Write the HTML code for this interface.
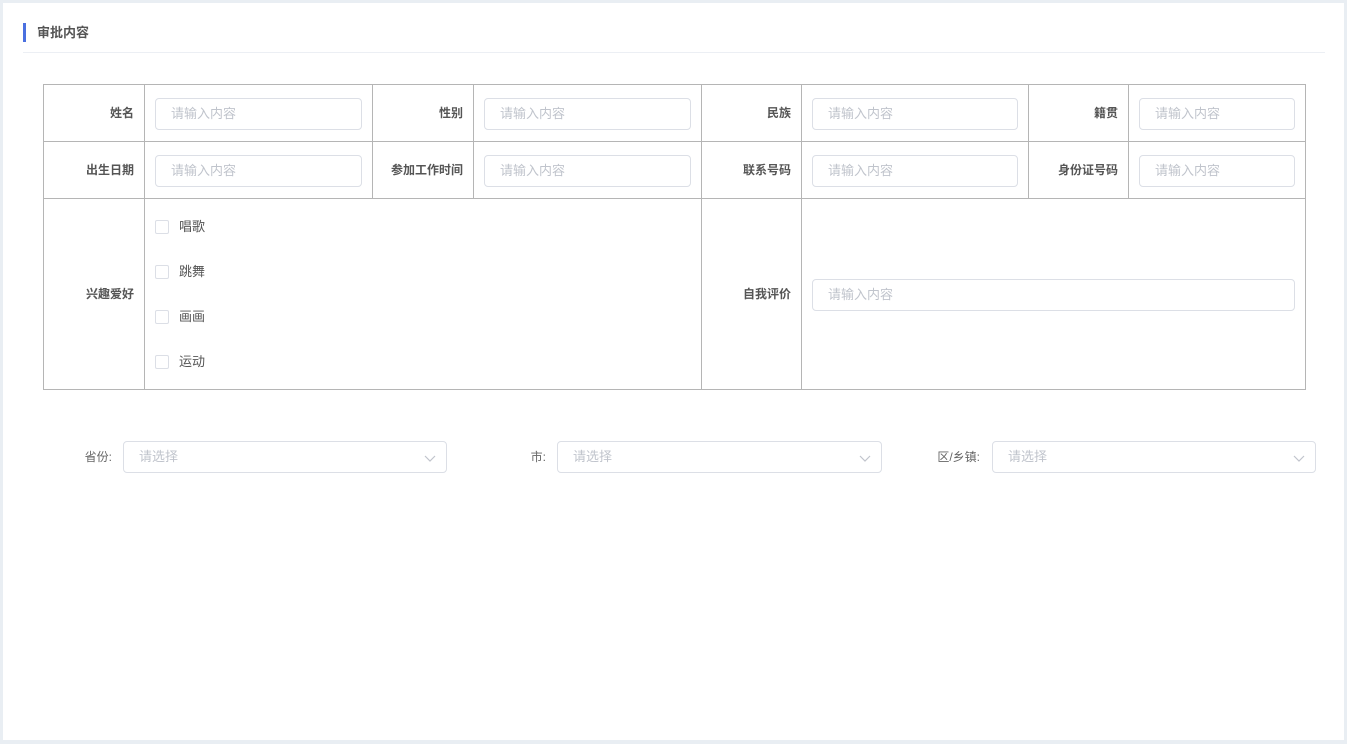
<!DOCTYPE html>
<html><head><meta charset="utf-8"><style>
*{box-sizing:border-box;margin:0;padding:0}
body{width:1347px;height:744px;background:#e9eef3;font-family:"Liberation Sans","Noto Sans CJK SC",sans-serif;position:relative;overflow:hidden}
.card{position:absolute;left:3px;top:3px;width:1341px;height:737px;background:#fff}
.a{position:absolute}
.title{left:23px;top:23px;height:19px;border-left:3px solid #4a70e0;padding-left:11px;font-size:13px;font-weight:bold;color:#555;line-height:19px}
.hr{left:23px;top:52px;width:1302px;height:1px;background:#eceff4}
.v{background:#b5b5b5;width:1px}
.h{background:#b5b5b5;height:1px}
.lbl{font-size:12px;font-weight:bold;color:#555;text-align:right;line-height:16px}
.in{border:1px solid #dcdfe6;border-radius:4px;height:32px;font-size:13px;color:#c0c4cc;padding-left:15px;line-height:30px}
.cb{width:14px;height:14px;border:1px solid #dcdfe6;border-radius:2px}
.ct{font-size:13px;color:#555;line-height:16px}
.sl{font-size:12px;color:#666;line-height:16px;text-align:right}
.sel{border:1px solid #dcdfe6;border-radius:4px;height:32px;font-size:13px;color:#c0c4cc;padding-left:15px;line-height:30px}
.sel svg{position:absolute;right:10px;top:10px}
</style></head><body>
<div class="card"></div>
<div class="a title">审批内容</div>
<div class="a hr"></div>
<div class="a h" style="left:43px;top:84px;width:1263px"></div>
<div class="a h" style="left:43px;top:141px;width:1263px"></div>
<div class="a h" style="left:43px;top:198px;width:1263px"></div>
<div class="a h" style="left:43px;top:389px;width:1263px"></div>
<div class="a v" style="left:43px;top:84px;height:306px"></div>
<div class="a v" style="left:144px;top:84px;height:306px"></div>
<div class="a v" style="left:372px;top:84px;height:115px"></div>
<div class="a v" style="left:473px;top:84px;height:115px"></div>
<div class="a v" style="left:701px;top:84px;height:306px"></div>
<div class="a v" style="left:801px;top:84px;height:306px"></div>
<div class="a v" style="left:1028px;top:84px;height:115px"></div>
<div class="a v" style="left:1128px;top:84px;height:115px"></div>
<div class="a v" style="left:1305px;top:84px;height:306px"></div>
<div class="a lbl" style="left:44px;width:90px;top:105px">姓名</div>
<div class="a in" style="left:155px;top:98px;width:207px">请输入内容</div>
<div class="a lbl" style="left:373px;width:90px;top:105px">性别</div>
<div class="a in" style="left:484px;top:98px;width:207px">请输入内容</div>
<div class="a lbl" style="left:702px;width:89px;top:105px">民族</div>
<div class="a in" style="left:812px;top:98px;width:206px">请输入内容</div>
<div class="a lbl" style="left:1029px;width:89px;top:105px">籍贯</div>
<div class="a in" style="left:1139px;top:98px;width:156px">请输入内容</div>
<div class="a lbl" style="left:44px;width:90px;top:162px">出生日期</div>
<div class="a in" style="left:155px;top:155px;width:207px">请输入内容</div>
<div class="a lbl" style="left:373px;width:90px;top:162px">参加工作时间</div>
<div class="a in" style="left:484px;top:155px;width:207px">请输入内容</div>
<div class="a lbl" style="left:702px;width:89px;top:162px">联系号码</div>
<div class="a in" style="left:812px;top:155px;width:206px">请输入内容</div>
<div class="a lbl" style="left:1029px;width:89px;top:162px">身份证号码</div>
<div class="a in" style="left:1139px;top:155px;width:156px">请输入内容</div>
<div class="a lbl" style="left:44px;width:90px;top:286px">兴趣爱好</div>
<div class="a cb" style="left:155px;top:220px"></div><div class="a ct" style="left:179px;top:219px">唱歌</div>
<div class="a cb" style="left:155px;top:265px"></div><div class="a ct" style="left:179px;top:264px">跳舞</div>
<div class="a cb" style="left:155px;top:310px"></div><div class="a ct" style="left:179px;top:309px">画画</div>
<div class="a cb" style="left:155px;top:355px"></div><div class="a ct" style="left:179px;top:354px">运动</div>
<div class="a lbl" style="left:702px;width:89px;top:286px">自我评价</div>
<div class="a in" style="left:812px;top:279px;width:483px">请输入内容</div>
<div class="a sl" style="left:60px;width:52px;top:449px">省份:</div>
<div class="a sel" style="left:123px;top:441px;width:324px">请选择<svg width="12" height="12" viewBox="0 0 12 12"><path d="M1 4l5 5 5-5" fill="none" stroke="#c0c4cc" stroke-width="1.2"/></svg></div>
<div class="a sl" style="left:495px;width:51px;top:449px">市:</div>
<div class="a sel" style="left:557px;top:441px;width:325px">请选择<svg width="12" height="12" viewBox="0 0 12 12"><path d="M1 4l5 5 5-5" fill="none" stroke="#c0c4cc" stroke-width="1.2"/></svg></div>
<div class="a sl" style="left:918px;width:62px;top:449px">区/乡镇:</div>
<div class="a sel" style="left:992px;top:441px;width:324px">请选择<svg width="12" height="12" viewBox="0 0 12 12"><path d="M1 4l5 5 5-5" fill="none" stroke="#c0c4cc" stroke-width="1.2"/></svg></div>
</body></html>
